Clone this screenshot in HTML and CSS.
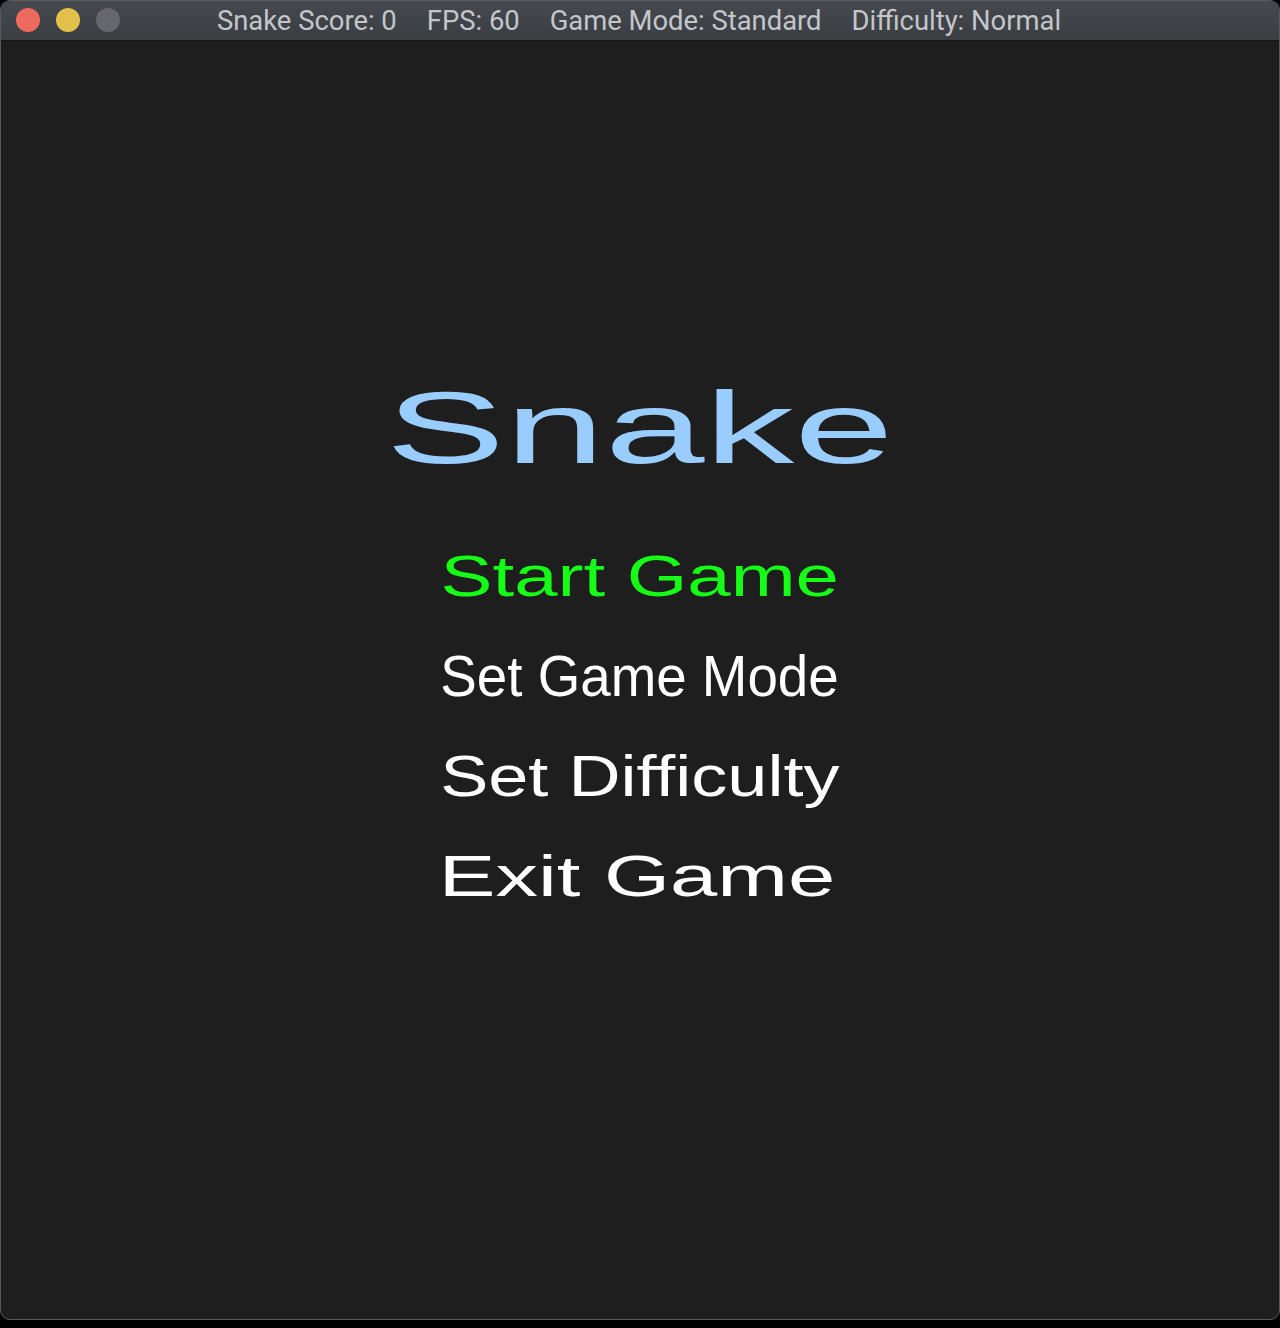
FILE: index.html
```html
<!DOCTYPE html>
<html lang="en">
<head>
<meta charset="utf-8">
<title>Snake</title>
<link rel="stylesheet" href="styles.css">
</head>
<body>
<div class="window">
  <div class="titlebar">
    <div class="lights">
      <span class="light red"></span>
      <span class="light yellow"></span>
      <span class="light grey"></span>
    </div>
    <div class="title">
      <span>Snake Score: 0</span>
      <span>FPS: 60</span>
      <span>Game Mode: Standard</span>
      <span>Difficulty: Normal</span>
    </div>
  </div>
  <div class="content">
    <div class="game-title"><span class="t-snake">Snake</span></div>
    <div class="menu">
      <div class="item active"><span class="t-start">Start Game</span></div>
      <div class="item"><span class="t-mode">Set Game Mode</span></div>
      <div class="item"><span class="t-diff">Set Difficulty</span></div>
      <div class="item item-exit"><span class="t-exit">Exit Game</span></div>
    </div>
  </div>
</div>
</body>
</html>
```
FILE: styles.css
```css
html, body {
  margin: 0;
  padding: 0;
  background: #000;
}
body {
  width: 1280px;
  height: 1328px;
  overflow: hidden;
  font-family: "Liberation Sans", Arial, sans-serif;
}
.window {
  width: 1278px;
  height: 1318px;
  border: 1px solid #58595c;
  border-radius: 10px;
  overflow: hidden;
  background: #1e1e1e;
  display: flex;
  flex-direction: column;
}
.titlebar {
  height: 39px;
  flex: none;
  border-bottom: 1px solid #141414;
  background: linear-gradient(#46494e, #3a3d42);
  position: relative;
  display: flex;
  align-items: center;
  justify-content: center;
}
.lights {
  position: absolute;
  left: 15px;
  top: 7px;
  display: flex;
  gap: 16px;
}
.light {
  width: 24px;
  height: 24px;
  border-radius: 50%;
  display: block;
}
.red { background: #ee6a5e; }
.yellow { background: #e2c04b; }
.grey { background: #66686c; }
.title {
  display: flex;
  gap: 30px;
  color: #c4c6ca;
  font-family: Roboto, "Liberation Sans", sans-serif;
  font-size: 27.4px;
  line-height: 39px;
  padding-right: 2px;
  padding-top: 1px;
}
.content {
  flex: 1;
  display: flex;
  flex-direction: column;
  align-items: center;
  padding-top: 327px;
}
.game-title {
  height: 120px;
  line-height: 120px;
  font-size: 102px;
  color: #99ccff;
  margin-bottom: 38px;
}
.game-title span,
.item span {
  display: inline-block;
  white-space: nowrap;
}
.t-snake { transform: scaleX(1.758); }
.menu {
  display: flex;
  flex-direction: column;
  align-items: center;
}
.item {
  height: 100px;
  line-height: 100px;
  font-size: 57px;
  color: #ffffff;
}
.item.active { color: #16ff16; }
.item-exit { margin-right: 6px; }
.t-start { transform: scaleX(1.367); }
.t-mode { transform: scaleX(0.96); }
.t-diff { transform: scaleX(1.265); }
.t-exit { transform: scaleX(1.49); }
```
